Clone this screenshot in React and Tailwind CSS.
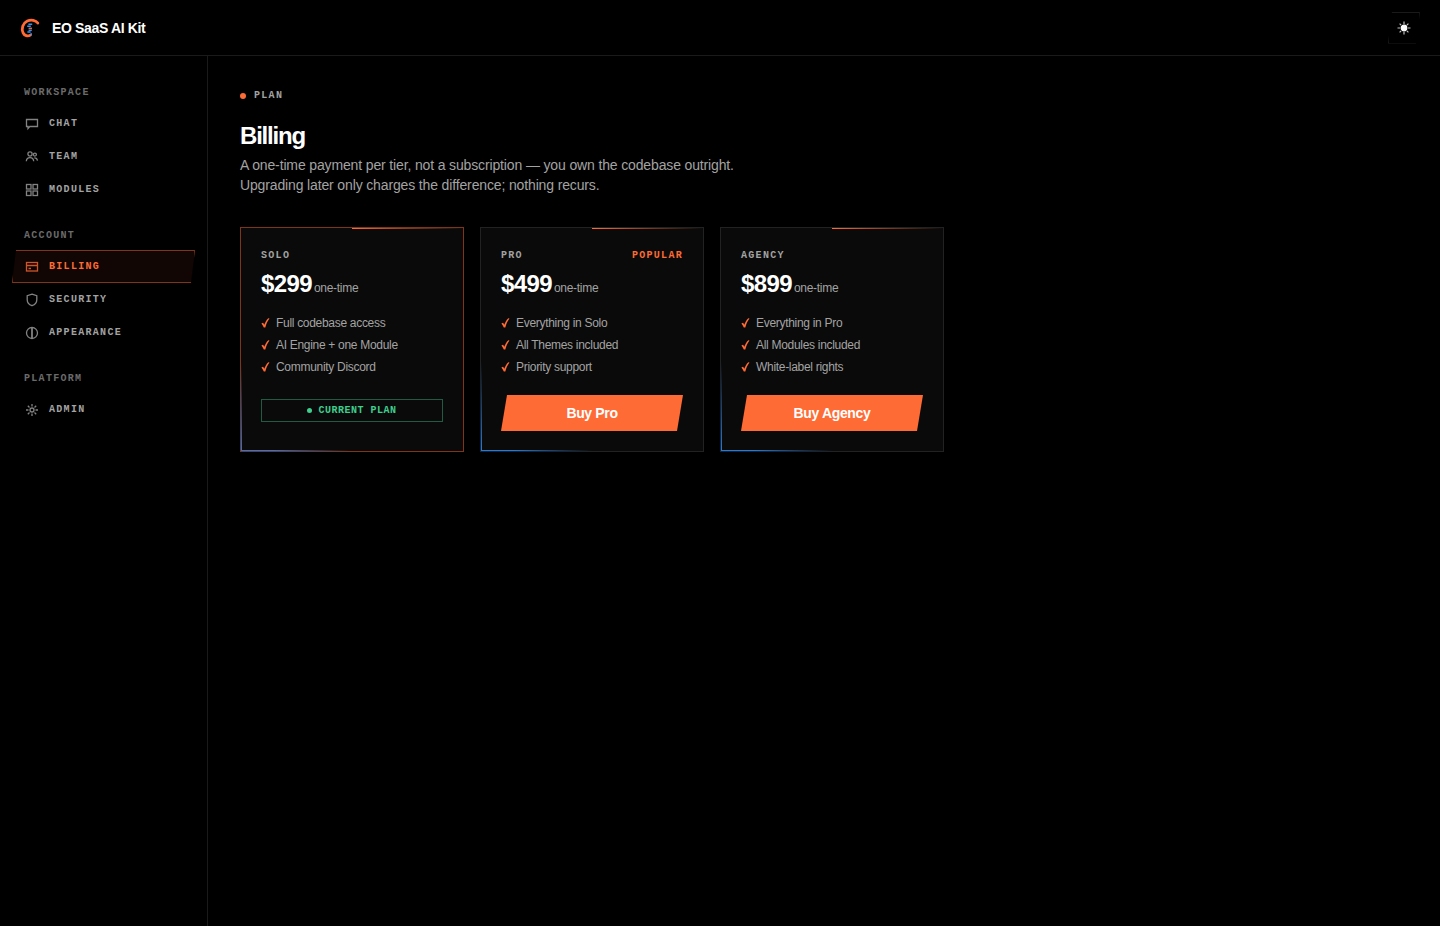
import React from 'react';

const MONO = "font-['Liberation_Mono',monospace] uppercase text-[10px] leading-4";
const LABEL = `${MONO} font-bold tracking-[0.13em]`;

// --- Icons ---
const Icon = ({ children }) => (
  <svg width="14" height="14" viewBox="0 0 14 14" fill="none" stroke="currentColor" strokeWidth="1.3" className="shrink-0 opacity-80" aria-hidden="true">
    {children}
  </svg>
);

const ChatIcon = () => (
  <Icon>
    <path d="M1.5 2.5h11v7H4.800L3 11.500V9.500H1.500z" />
  </Icon>
);

const TeamIcon = () => (
  <Icon>
    <circle cx="5" cy="4" r="2.1" />
    <circle cx="9.9" cy="4.6" r="1.5" />
    <path d="M1.3 11.200c.200-2.300 1.700-3.600 3.700-3.600s3.500 1.300 3.700 3.600M9.300 7.800c1.700-.1 2.900 1 3.200 2.900" />
  </Icon>
);

const ModulesIcon = () => (
  <Icon>
    <rect x="1.500" y="1.500" width="4.500" height="4.500" />
    <rect x="8" y="1.500" width="4.500" height="4.500" />
    <rect x="1.500" y="8" width="4.500" height="4.500" />
    <rect x="8" y="8" width="4.500" height="4.500" />
  </Icon>
);

const BillingIcon = () => (
  <Icon>
    <rect x="1.500" y="2.500" width="11" height="8.500" />
    <path d="M1.500 5.500h11M3.500 8.500h2.500" />
  </Icon>
);

const SecurityIcon = () => (
  <Icon>
    <path d="M7 1.200l4.800 1.500v4c0 2.900-1.900 4.900-4.800 6-2.900-1.100-4.800-3.100-4.800-6v-4z" />
  </Icon>
);

const AppearanceIcon = () => (
  <Icon>
    <circle cx="7" cy="7" r="5.500" />
    <path d="M7 1.500v11" strokeWidth="1.800" />
  </Icon>
);

const AdminIcon = () => (
  <Icon>
    <circle cx="7" cy="7" r="2" />
    <path d="M7 1v2.500M7 10.500V13M1 7h2.500M10.500 7H13M2.800 2.800l1.700 1.700M9.500 9.500l1.700 1.700M2.800 11.200l1.700-1.700M9.500 4.500l1.700-1.700" />
  </Icon>
);

const SunIcon = () => (
  <svg width="14" height="14" viewBox="0 0 14 14" stroke="currentColor" strokeWidth="1.2" aria-hidden="true">
    <circle cx="7" cy="7" r="2.800" fill="currentColor" />
    <path d="M7 .5v2.500M7 11v2.500M.5 7H3M11 7h2.500M2.600 2.600l1.500 1.500M9.900 9.900l1.500 1.500M2.600 11.400l1.500-1.500M9.900 4.100l1.500-1.500" strokeOpacity="0.75" />
  </svg>
);

const Logo = () => (
  <svg width="20" height="20" viewBox="0 0 20 20" fill="none" aria-hidden="true">
    <path d="M17.800 5C15.800 2.200 11.200 1.200 7.300 3 2.600 5.400 1.200 10.600 3.100 14.800c1.300 2.900 4.600 4 7.300 2.300" stroke="#ff6b35" strokeWidth="2.800" strokeLinecap="round" />
    <path d="M8.400 6.300h3.800M7.200 8.200h3.600M8.600 12.200h3.200M7.400 14h3.200" stroke="#3b8fe8" strokeWidth="1.500" />
    <path d="M8.600 10.300h3.400" stroke="#ff6b35" strokeWidth="1.300" />
    <path d="M10.400 16.200h1.600" stroke="#3b8fe8" strokeWidth="2" />
  </svg>
);

const CheckIcon = () => (
  <svg width="9" height="10" viewBox="0 0 9 10" fill="#ff6b35" className="shrink-0" aria-hidden="true">
    <path d="M.4 5.600L2 4.700c.6.600 1 1.300 1.300 2.100C4.200 4.200 5.500 2 7.300.3l1.200.2C6.600 3 5.200 5.900 4.300 9.600H2.800C2.200 8.100 1.500 6.800.4 5.600z" />
  </svg>
);

// --- Data ---
const navGroups = [
  {
    title: 'Workspace',
    items: [
      { label: 'Chat', icon: ChatIcon },
      { label: 'Team', icon: TeamIcon },
      { label: 'Modules', icon: ModulesIcon },
    ],
  },
  {
    title: 'Account',
    items: [
      { label: 'Billing', icon: BillingIcon, active: true },
      { label: 'Security', icon: SecurityIcon },
      { label: 'Appearance', icon: AppearanceIcon },
    ],
  },
  {
    title: 'Platform',
    items: [{ label: 'Admin', icon: AdminIcon }],
  },
];

const plans = [
  { name: 'Solo', price: '$299', current: true, features: ['Full codebase access', 'AI Engine + one Module', 'Community Discord'] },
  { name: 'Pro', price: '$499', popular: true, features: ['Everything in Solo', 'All Themes included', 'Priority support'] },
  { name: 'Agency', price: '$899', features: ['Everything in Pro', 'All Modules included', 'White-label rights'] },
];

function NavItem({ item }) {
  const ItemIcon = item.icon;
  const styles = item.active
    ? 'border-[#7e3519] bg-[#110603] text-[#ff6b35]'
    : 'border-transparent text-[#a3a3a3]';
  return (
    <a
      href="#"
      aria-current={item.active ? 'page' : undefined}
      className={`flex h-[33px] items-center gap-2.5 border px-3 [clip-path:polygon(4px_0,100%_0,calc(100%-4px)_100%,0_100%)] ${styles}`}
    >
      <ItemIcon />
      <span className={LABEL}>{item.label}</span>
    </a>
  );
}

function PlanCard({ plan }) {
  return (
    <article className={`relative flex flex-col border bg-[#0a0a0a] p-5 ${plan.current ? 'border-[#7e3519]' : 'border-[#222222]'}`}>
      {/* Edge accents */}
      <span className="absolute top-0 right-0 left-1/2 h-px bg-[linear-gradient(90deg,#ff6b35,#ff6b3500)]" />
      <span className="absolute right-1/2 bottom-0 left-0 h-px bg-[linear-gradient(90deg,#1a7cf0,#1a7cf0_30%,#1a7cf000)]" />
      <span className="absolute bottom-0 left-0 h-2/5 w-px bg-[linear-gradient(0deg,#1a7cf0,#1a7cf000)]" />

      <div className={`flex justify-between ${LABEL}`}>
        <h2 className="text-[#a3a3a3]">{plan.name}</h2>
        {plan.popular && <span className="text-[#ff6b35]">Popular</span>}
      </div>

      <p className="mt-1 flex items-baseline gap-0.5 leading-8">
        <span className="text-2xl leading-8 font-bold tracking-tight text-white">{plan.price}</span>
        <span className="text-xs tracking-tight text-[#a3a3a3]">one-time</span>
      </p>

      <ul className="mt-3 text-xs leading-[22px] tracking-tight text-[#a3a3a3]">
        {plan.features.map((feature) => (
          <li key={feature} className="flex items-center gap-1.5">
            <CheckIcon />
            {feature}
          </li>
        ))}
      </ul>

      {plan.current ? (
        <div className={`mt-[21px] flex h-[23px] items-center justify-center gap-1.5 border border-[#1f5c43] font-bold tracking-wider text-[#3ecf8e] ${MONO}`}>
          <span className="size-[5px] rounded-full bg-[#3ecf8e]" />
          Current plan
        </div>
      ) : (
        <button
          type="button"
          className="mt-[17px] h-9 bg-[#ff6b35] text-sm font-bold tracking-tight text-white [clip-path:polygon(6px_0,100%_0,calc(100%-6px)_100%,0_100%)]"
        >
          Buy {plan.name}
        </button>
      )}
    </article>
  );
}

function App() {
  return (
    <div className="flex min-h-screen flex-col bg-black font-['Liberation_Sans',Arial,sans-serif] text-white">
      {/* --- Top Bar --- */}
      <header className="flex h-14 items-center justify-between border-b border-[#1a1a1a] px-5">
        <a href="#" className="flex items-center gap-3">
          <Logo />
          <span className="text-sm font-bold tracking-tight">EO SaaS AI Kit</span>
        </a>
        <button
          type="button"
          aria-label="Toggle theme"
          className="flex size-8 items-center justify-center border border-[#1a1a1a] [clip-path:polygon(4px_0,100%_0,calc(100%-4px)_100%,0_100%)]"
        >
          <SunIcon />
        </button>
      </header>

      <div className="flex flex-1">
        {/* --- Sidebar --- */}
        <nav className="w-52 shrink-0 space-y-[22px] border-r border-[#1a1a1a] px-3 pt-[29px]">
          {navGroups.map((group) => (
            <section key={group.title}>
              <h2 className={`mb-1.5 px-3 text-[#6b6b6b] ${LABEL}`}>{group.title}</h2>
              {group.items.map((item) => (
                <NavItem key={item.label} item={item} />
              ))}
            </section>
          ))}
        </nav>

        {/* --- Billing --- */}
        <main className="flex-1 p-8">
          <p className={`flex items-center gap-2 text-[#a3a3a3] ${LABEL}`}>
            <span className="size-1.5 rounded-full bg-[#ff6b35]" />
            Plan
          </p>
          <h1 className="mt-4 text-2xl leading-8 font-bold tracking-tighter">Billing</h1>
          <p className="mt-[3px] max-w-[520px] text-sm leading-5 tracking-[-0.01em] text-[#a3a3a3]">
            A one-time payment per tier, not a subscription — you own the codebase outright. Upgrading later only
            charges the difference; nothing recurs.
          </p>

          <div className="mt-8 grid max-w-[704px] grid-cols-3 gap-4">
            {plans.map((plan) => (
              <PlanCard key={plan.name} plan={plan} />
            ))}
          </div>
        </main>
      </div>
    </div>
  );
}

export default App;
